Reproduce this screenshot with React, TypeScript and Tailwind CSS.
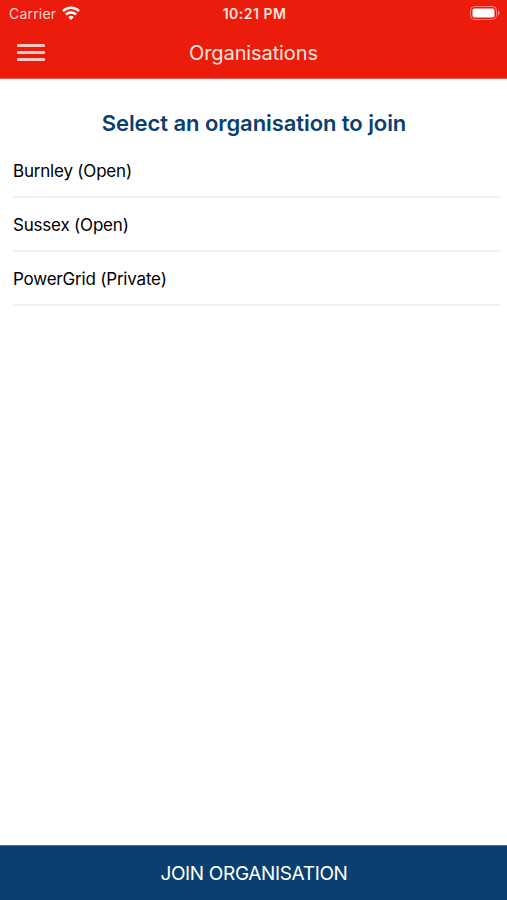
const organisations = [
  { id: 1, name: "Burnley", access: "Open" },
  { id: 2, name: "Sussex", access: "Open" },
  { id: 3, name: "PowerGrid", access: "Private" },
]

function StatusBar() {
  return (
    <div className="grid h-[27px] grid-cols-3 items-center pl-[9px] pr-[7px] text-[14px] leading-none">
      <div className="flex items-center gap-[6px]">
        <span className="tracking-[0.2px] text-[#ffd9d3]">Carrier</span>
        <svg className="-mt-[2px]" width="18" height="14" viewBox="0 0 18 14" fill="none" stroke="currentColor" strokeWidth="2.5">
          <path d="M1 5.1a11.5 11.5 0 0 1 16 0" />
          <path d="M3.9 8.6a7.2 7.2 0 0 1 10.2 0" />
          <path d="M9 14 6.3 11.2a3.8 3.8 0 0 1 5.4 0Z" fill="currentColor" stroke="none" />
        </svg>
      </div>
      <span className="text-center font-semibold tracking-[0.5px] text-[#ffe4df]">10:21 PM</span>
      <svg className="-mt-px justify-self-end" width="30" height="14" viewBox="0 0 30 14">
        <rect x="0.5" y="0.5" width="26" height="13" rx="4" fill="none" stroke="currentColor" opacity="0.45" />
        <rect x="2.5" y="2.5" width="22" height="9" rx="2" fill="currentColor" />
        <path d="M28 4.5a2.7 2.7 0 0 1 0 5Z" fill="currentColor" opacity="0.5" />
      </svg>
    </div>
  )
}

export default function App() {
  return (
    <div className="flex h-screen flex-col bg-white font-['Inter',sans-serif] text-black">
      <header className="h-[79px] border-b border-[#f15a4c] bg-[#ec1c0c] text-white">
        <StatusBar />
        <div className="grid h-[52px] grid-cols-[60px_1fr_60px] items-center">
          <button className="mb-px ml-[17px] flex w-7 flex-col gap-[4px]" aria-label="Menu">
            <span className="h-[3px] w-full rounded-[1px] bg-[#fdc9c2]" />
            <span className="h-[3px] w-full rounded-[1px] bg-[#fdc9c2]" />
            <span className="h-[3px] w-full rounded-[1px] bg-[#fdc9c2]" />
          </button>
          <h1 className="text-center text-[20px] tracking-[-0.1px] text-[#ffe4df]">Organisations</h1>
        </div>
      </header>

      <main className="flex-1 pl-[13px] pr-[7px] pt-[28px]">
        <h2 className="-ml-[5px] text-center text-[22px] font-semibold leading-8 tracking-[-0.07px] text-[#0a3f70]">
          Select an organisation to join
        </h2>
        <ul className="mt-[5px]">
          {organisations.map((org) => (
            <li
              key={org.id}
              className="flex h-[54px] items-center border-b-2 border-[#efefef] pt-[3px] text-[17px] tracking-[-0.2px]"
            >
              {org.name} ({org.access})
            </li>
          ))}
        </ul>
      </main>

      <button className="h-[55px] border-t border-[#4d7492] bg-[#0a3f70] pl-px pt-[2px] text-[19px] tracking-[-0.35px] text-white">
        JOIN ORGANISATION
      </button>
    </div>
  )
}
